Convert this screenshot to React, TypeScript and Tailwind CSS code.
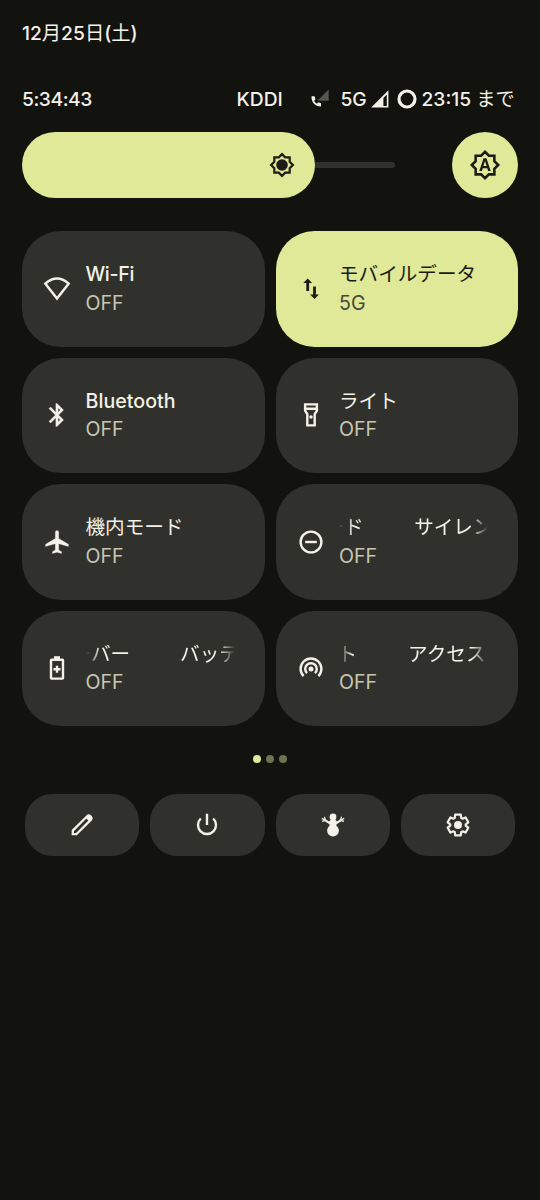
import type { ReactNode } from 'react';

const FG = '#f3f1e8';

function Icon({ children, size = 28 }: { children: ReactNode; size?: number }) {
  return (
    <svg width={size} height={size} viewBox="-14 -14 28 28" fill="none" className="block shrink-0">
      {children}
    </svg>
  );
}

function Material({ d, bold = 0 }: { d: string; bold?: number }) {
  return (
    <path transform="scale(1.146) translate(-12 -12)" d={d} fill="currentColor" stroke="currentColor" strokeWidth={bold} />
  );
}

const wifi = (
  <Icon>
    <path d="M-11.7 -5.4Q0 -15.4 11.7 -5.4L0 9.5Z" stroke="currentColor" strokeWidth="2.4" />
  </Icon>
);
const data = (
  <Icon>
    <path fill="currentColor" d="M-3.3 -10.4L1.1 -6H-1.9V2H-4.7V-6H-7.7Z M3.5 10L7.9 5.6H4.9V-2.6H2.1V5.6H-0.9Z" />
  </Icon>
);
const bluetooth = (
  <Icon>
    <Material
      bold={0.3}
      d="M17.71 7.71L12 2h-1v7.59L6.41 5 5 6.41 10.59 12 5 17.59 6.41 19 11 14.41V22h1l5.71-5.71-4.3-4.29 4.3-4.29zM13 5.83l1.88 1.88L13 9.59V5.83zm1.88 10.46L13 18.17v-3.76l1.88 1.88z"
    />
  </Icon>
);
const light = (
  <Icon>
    <path d="M-5.9 -10.6H5.9V-4.4L3.7 -1V10.4H-3.7V-1L-5.9 -4.4ZM-5.9 -6.2H5.9" stroke="currentColor" strokeWidth="2.4" />
    <circle cy="2" r="1.8" fill="currentColor" />
  </Icon>
);
const plane = (
  <Icon>
    <Material
      bold={0.2}
      d="M22 16v-2l-8.5-5V3.5c0-.83-.67-1.5-1.5-1.5s-1.5.67-1.5 1.5V9L2 14v2l8.5-2.5V19L8 20.5V22l4-1 4 1v-1.5L13.5 19v-5.5L22 16z"
    />
  </Icon>
);
const dnd = (
  <Icon>
    <circle r="10.4" stroke="currentColor" strokeWidth="2.4" />
    <path d="M-5.8 0H5.8" stroke="currentColor" strokeWidth="2.4" />
  </Icon>
);
const battery = (
  <Icon>
    <rect x="-6" y="-8.3" width="12" height="18.9" rx="0.5" stroke="currentColor" strokeWidth="2.4" />
    <path d="M-3 -10.4H3" stroke="currentColor" strokeWidth="2.8" />
    <path d="M-3.5 1.2H3.5M0 -2.3V4.7" stroke="currentColor" strokeWidth="2.4" />
  </Icon>
);
const hotspot = (
  <Icon>
    <path d="M-7.4 8.2A10.4 10.4 0 1 1 7.4 8.2M-4 5.2A5.8 5.8 0 1 1 4 5.2" stroke="currentColor" strokeWidth="2.4" />
    <circle cy="1" r="2.5" fill="currentColor" />
  </Icon>
);
const edit = (
  <Icon>
    <path d="M-9.2 9.2V5.6L5.6 -9.2Q7 -10 8.3 -8.7L8.9 -8.1Q10.2 -6.8 9.2 -5.6L-5.6 9.2Z" stroke="currentColor" strokeWidth="2.3" />
    <path d="M3.6 -7.2L5.8 -9.6Q7.2 -10.6 8.6 -9.2L9.4 -8.4Q10.6 -7 9.6 -5.8L7.2 -3.6Z" fill="currentColor" />
  </Icon>
);
const power = (
  <Icon>
    <path d="M-6.2 -6.5A9 9 0 1 0 6.2 -6.5M0 -11.3V0" stroke="currentColor" strokeWidth="2.4" />
  </Icon>
);
const user = (
  <Icon>
    <circle cy="-8" r="3.4" fill="currentColor" />
    <path d="M-2 -5.5L-4 -3.5L-3.2 2H3.2L4 -3.5L2 -5.5Z" fill="currentColor" />
    <circle cy="5.6" r="5.9" fill="currentColor" />
    <path d="M-3 -1.6L-7.6 -4.6M3 -1.6L7.6 -4.6" stroke="currentColor" strokeWidth="2.3" />
    <path d="M-7.4 -4.6L-8.6 -8.2M-7.4 -4.6L-11.2 -6.6M-7.4 -4.6L-11 -3.6M7.4 -4.6L8.6 -8.2M7.4 -4.6L11.2 -6.6M7.4 -4.6L11 -3.6" stroke="currentColor" strokeWidth="1.2" />
  </Icon>
);
const gear = (
  <Icon>
    <path
      transform="scale(1.03) translate(-12 -12)"
      stroke="currentColor"
      strokeWidth="2.1"
      strokeLinejoin="round"
      d="m9.25 22l-.4-3.2q-.325-.125-.612-.3t-.563-.375L4.7 19.375l-2.75-4.75l2.575-1.95Q4.5 12.5 4.5 12.338v-.675q0-.163.025-.338L1.95 9.375l2.75-4.75l2.975 1.25q.275-.2.575-.375t.6-.3l.4-3.2h5.5l.4 3.2q.325.125.613.3t.562.375l2.975-1.25l2.75 4.75l-2.575 1.95q.025.175.025.338v.674q0 .163-.05.338l2.575 1.95l-2.75 4.75l-2.95-1.25q-.275.2-.575.375t-.6.3l-.4 3.2z"
    />
    <circle r="4" fill="currentColor" />
  </Icon>
);

const BURST = 'M0 -10.9L3.2 -7.7H7.7V-3.2L10.9 0L7.7 3.2V7.7H3.2L0 10.9L-3.2 7.7H-7.7V3.2L-10.9 0L-7.7 -3.2V-7.7H-3.2Z';

function Tile({ icon, label, active, status = 'OFF' }: { icon: ReactNode; label: ReactNode; active?: boolean; status?: string }) {
  return (
    <div
      className={
        active
          ? 'flex h-[115.5px] items-center rounded-[38.5px] bg-[#dfe997] pl-[21px] text-[#1b1c17]'
          : 'flex h-[115.5px] items-center rounded-[38.5px] bg-[#30312c] pl-[21px] text-[#f3f1e8]'
      }
    >
      {icon}
      <div className="ml-[14.5px] flex w-[149px] flex-col whitespace-nowrap text-[19.6px] leading-[28.5px]">
        <div>{label}</div>
        <div className={active ? 'text-[#484a37]' : 'text-[#c8c7b2]'}>{status}</div>
      </div>
    </div>
  );
}

function Marquee({ tail, head, shift, gap }: { tail: string; head: string; shift: number; gap: number }) {
  return (
    <div className="overflow-hidden [mask-image:linear-gradient(to_right,transparent,black_14px,black_133px,transparent)]">
      <div className="flex" style={{ marginLeft: shift, gap }}>
        <span>{tail}</span>
        <span>{head}</span>
      </div>
    </div>
  );
}

export default function App() {
  return (
    <div className="flex h-[1200px] w-[540px] flex-col bg-[#12130e] px-[22px] font-['Inter','Noto_Sans_CJK_JP',sans-serif] text-[#f3f1e8]">
      <div className="mt-[19px] h-7 whitespace-nowrap text-[19.25px] leading-7">
        <span className="font-medium">12</span>月<span className="font-medium">25</span>日<span className="font-medium">(</span>土
        <span className="font-medium">)</span>
      </div>

      <div className="mt-[38px] flex h-7 items-center whitespace-nowrap text-[19.25px] leading-7 font-medium">
        <span className="w-[214.5px] tracking-[-0.45px]">5:34:43</span>
        <span className="w-[73px]">KDDI</span>
        <svg width="20" height="20" viewBox="0 0 20 20" className="mr-[11px]">
          <path d="M18.7 0.5V11.8H11.5L7.6 11.5Z" fill="#55564f" />
          <path
            d="M1.6 7.2C0.8 12.6 5.2 17.6 11 17.5V14.3L8.3 13.3L6.9 14.8C5.6 14 4.6 12.9 4.1 11.8L5.4 10.4L4.6 7.2Z"
            fill={FG}
          />
        </svg>
        <span className="w-[30px] tracking-[-0.2px]">5G</span>
        <svg width="18" height="18" viewBox="0 0 18 18" className="mr-[8px]">
          <path d="M17.4 0.3V17.5H0.2Z M15.8 4.6L12.4 8V15.9H15.8Z" fillRule="evenodd" fill={FG} />
        </svg>
        <svg width="20" height="20" viewBox="0 0 20 20" className="mr-[5px]">
          <circle cx="10" cy="10" r="8" stroke={FG} strokeWidth="3.2" fill="none" />
        </svg>
        <span>
          23:15 <span className="font-normal">まで</span>
        </span>
      </div>

      <div className="mt-[19px] flex h-[66px] items-center">
        <div className="flex h-[66px] w-[293px] items-center justify-end rounded-full bg-[#dfe997] pr-[19px] text-[#1b1c17]">
          <Icon>
            <path d={BURST} stroke="currentColor" strokeWidth="2.2" />
            <circle r="5.8" fill="currentColor" />
          </Icon>
        </div>
        <div className="h-[5.5px] w-[79.5px] rounded-r-full bg-[#30312c]" />
        <div className="ml-auto flex size-[66px] items-center justify-center rounded-full bg-[#dfe997] text-[#1b1c17]">
          <Icon size={34}>
            <path d={BURST} stroke="currentColor" strokeWidth="2.1" />
            <path
              fillRule="evenodd"
              fill="currentColor"
              d="M-1.2 -5.5H1.2L4.7 5H2.6L1.8 2.6H-1.8L-2.6 5H-4.7Z M0 -3.2L1.3 0.9H-1.3Z"
            />
          </Icon>
        </div>
      </div>

      <div className="mt-[33px] grid grid-cols-2 gap-[11px]">
        <Tile icon={wifi} label={<span className="font-medium tracking-[-0.3px]">Wi-Fi</span>} />
        <Tile icon={data} label="モバイルデータ" status="5G" active />
        <Tile icon={bluetooth} label={<span className="font-medium tracking-[0.05px]">Bluetooth</span>} />
        <Tile icon={light} label="ライト" />
        <Tile icon={plane} label="機内モード" />
        <Tile icon={dnd} label={<Marquee tail="ード" head="サイレント" shift={-14.5} gap={50.5} />} />
        <Tile icon={battery} label={<Marquee tail="ーバー" head="バッテリー" shift={-14} gap={50} />} />
        <Tile icon={hotspot} label={<Marquee tail="ト" head="アクセスポ" shift={-1.5} gap={51} />} />
      </div>

      <div className="mt-[29px] flex h-2 items-center justify-center gap-[5px]">
        <div className="size-2 rounded-full bg-[#dfe997]" />
        <div className="size-2 rounded-full bg-[#6f734f]" />
        <div className="size-2 rounded-full bg-[#6f734f]" />
      </div>

      <div className="mt-[31px] grid grid-cols-4 gap-[11px] px-[3px]">
        {[edit, power, user, gear].map((icon, i) => (
          <div key={i} className="flex h-[61.5px] items-center justify-center rounded-[27.5px] bg-[#30312c]">
            {icon}
          </div>
        ))}
      </div>
    </div>
  );
}
